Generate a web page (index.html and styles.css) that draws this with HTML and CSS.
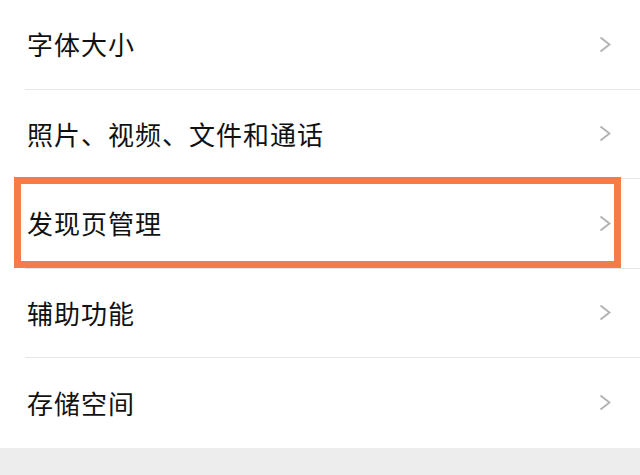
FILE: index.html
```html
<!DOCTYPE html>
<html lang="zh-CN">
<head>
  <meta charset="UTF-8">
  <title>设置</title>
  <meta name="viewport" content="width=device-width, initial-scale=1.0">
  <link rel="stylesheet" href="styles.css">
</head>
<body>
<ul class="settings-list">
  <li class="settings-item">
    <span class="label">字体大小</span>
    <svg class="chevron" width="12" height="17" viewBox="0 0 12 17"><polyline points="1.5,1.5 10.5,8.5 1.5,15.5"/></svg>
  </li>
  <li class="settings-item">
    <span class="label">照片、视频、文件和通话</span>
    <svg class="chevron" width="12" height="17" viewBox="0 0 12 17"><polyline points="1.5,1.5 10.5,8.5 1.5,15.5"/></svg>
  </li>
  <li class="settings-item highlighted">
    <span class="label">发现页管理</span>
    <svg class="chevron" width="12" height="17" viewBox="0 0 12 17"><polyline points="1.5,1.5 10.5,8.5 1.5,15.5"/></svg>
    <div class="highlight-box"></div>
  </li>
  <li class="settings-item">
    <span class="label">辅助功能</span>
    <svg class="chevron" width="12" height="17" viewBox="0 0 12 17"><polyline points="1.5,1.5 10.5,8.5 1.5,15.5"/></svg>
  </li>
  <li class="settings-item">
    <span class="label">存储空间</span>
    <svg class="chevron" width="12" height="17" viewBox="0 0 12 17"><polyline points="1.5,1.5 10.5,8.5 1.5,15.5"/></svg>
  </li>
</ul>
</body>
</html>
```

FILE: styles.css
```css
html, body {
  margin: 0;
  padding: 0;
  background: #ededed;
  height: 100%;
}
body {
  font-family: 'Noto Sans CJK SC', 'Noto Sans', sans-serif;
  color: #111;
}
.settings-list {
  list-style: none;
  margin: 0;
  padding: 0 0 0 25px;
  background: #fff;
}
.settings-item {
  position: relative;
  display: flex;
  align-items: center;
  justify-content: space-between;
  box-sizing: border-box;
  height: 89.5px;
  padding: 0 29px 0 2px;
  border-bottom: 1px solid #e6e6e6;
}
.settings-item:last-child {
  border-bottom: none;
}
.label {
  font-size: 26px;
  line-height: 1;
  letter-spacing: 1px;
}
.chevron {
  display: block;
}
.chevron polyline {
  fill: none;
  stroke: #b3b3b3;
  stroke-width: 2;
}
.highlight-box {
  position: absolute;
  left: -11px;
  top: -2px;
  width: 607px;
  height: 91px;
  box-sizing: border-box;
  border: 7px solid #f47b4a;
  pointer-events: none;
}
```
